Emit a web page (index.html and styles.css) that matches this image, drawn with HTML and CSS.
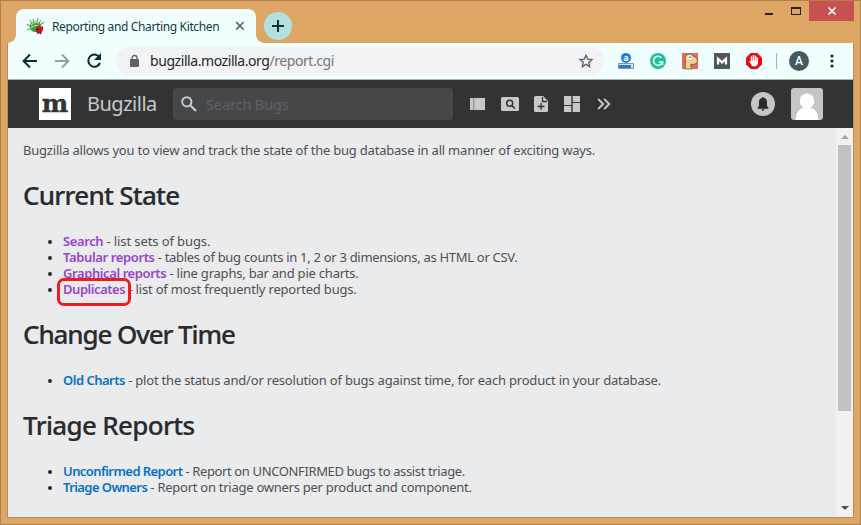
FILE: index.html
```html
<!DOCTYPE html>
<html lang="en">
<head>
<meta charset="utf-8">
<title>Reporting and Charting Kitchen</title>
<link rel="stylesheet" href="styles.css">
</head>
<body>
<div class="window">
  <header class="titlebar">
    <div class="tab">
      <svg class="favicon" width="18" height="18" viewBox="0 0 18 18"><g stroke="#4fae50" stroke-width="1.1" fill="none"><path d="M5 7 3 3M7 6 6 2M10 5 11 1M12 6 14 3M13 8 17 5M3 9 0 7M3 12 0 13"/></g><ellipse cx="8.500" cy="9.800" rx="5.800" ry="5.300" fill="#3f9a46"/><path d="M4 8q4-4 8-2M4 11q4-4 8-2" stroke="#a5d993" stroke-width="1.200" fill="none"/><path d="m9 11 3-3 2 2 2-1v4l-2 3-4 1-1-3z" fill="#d51218"/><path d="m9 12 2 1M13 15l1 2" stroke="#421814" stroke-width="1.500"/></svg>
      <span class="tab-title">Reporting and Charting Kitchen</span>
      <svg class="tab-close" width="10" height="10" viewBox="0 0 10 10"><path d="m1.200 1.200 7.400 7.400m0-7.400L1.200 8.600" stroke="#53706f" stroke-width="1.700"/></svg>
    </div>
    <div class="new-tab"><svg width="12" height="12" viewBox="0 0 12 12"><path d="M6 0v12M0 6h12" stroke="#0b3336" stroke-width="2"/></svg></div>
    <div class="controls">
      <i class="minimize"></i><i class="maximize"></i>
      <div class="close"><svg width="8" height="8" viewBox="0 0 8 8"><path d="m.5.5 7 7m0-7-7 7" stroke="#fff" stroke-width="1.700"/></svg></div>
    </div>
  </header>
  <main class="frame">
    <nav class="toolbar">
      <svg class="back" width="16" height="16" viewBox="0 0 16 16"><path d="M15 8H2M8 1.500 1.600 8 8 14.500" fill="none" stroke="#0a2c30" stroke-width="2"/></svg>
      <svg class="forward" width="16" height="16" viewBox="0 0 16 16"><path d="M1 8h13M8 1.500 14.400 8 8 14.500" fill="none" stroke="#8da2a4" stroke-width="2"/></svg>
      <svg class="reload" width="16" height="16" viewBox="0 0 16 16"><path d="M13.400 4.200A6.100 6.100 0 1 0 14 10" fill="none" stroke="#0a2c30" stroke-width="2"/><path d="M15 0v7H8z" fill="#0a2c30"/></svg>
      <div class="address">
        <svg class="lock" width="9" height="12" viewBox="0 0 9 12"><rect y="4" width="9" height="8" rx="1" fill="#5f6368"/><path d="M2 5V3a2.500 2.500 0 0 1 5 0v2" fill="none" stroke="#5f6368" stroke-width="1.300"/></svg>
        <span class="url">bugzilla.mozilla.org<span class="path">/report.cgi</span></span>
        <svg class="star" width="14" height="14" viewBox="0 0 14 14"><path d="m7 1.300 1.700 3.800 4.200.4-3.100 2.800.9 4.200L7 10.300l-3.700 2.200.9-4.200-3.100-2.800 4.200-.4z" fill="none" stroke="#5f6368" stroke-width="1.400"/></svg>
      </div>
      <div class="extensions">
        <svg width="16" height="16" viewBox="0 0 16 16"><circle cx="8" cy="4.900" r="5" fill="#1a7ee6"/><text x="8" y="7.600" text-anchor="middle" class="ext-a">a</text><path d="M.5 10.500h15v5H.5z" fill="#dfe5e8" stroke="#8a949c"/><path d="M1 12h12v3H1z" fill="#2878dc"/></svg>
        <svg width="16" height="16" viewBox="0 0 16 16"><circle cx="8" cy="8" r="8" fill="#15c39a"/><path d="M11.400 4.800A4.500 4.500 0 1 0 12.400 9H8.800m3.700-.1v3" fill="none" stroke="#fff" stroke-width="1.600"/></svg>
        <svg width="16" height="16" viewBox="0 0 16 16"><path d="M0 0h16v16H0z" fill="#e66a60"/><path d="M3 16 3.500 8Q2 3 5.500 1.500T11 3q4 1 4.500 4T13 11q-3 1-4 0-1 2 1 5z" fill="#f4cf91" stroke="#5e4632" stroke-width=".7"/><circle cx="7.500" cy="4.300" r="2.200" fill="#fff"/><circle cx="8" cy="4.300" r=".8" fill="#222"/></svg>
        <svg width="16" height="16" viewBox="0 0 16 16"><path d="M0 0h16v16H0z" fill="#50575c"/><path d="M4 11.500V5.800l4 3.600 4-3.600v5.700" fill="none" stroke="#fff" stroke-width="2.200"/></svg>
        <svg width="16" height="16" viewBox="0 0 16 16"><path d="M4.700 0h6.600L16 4.700v6.600L11.300 16H4.700L0 11.300V4.700z" fill="#e40d0d"/><path d="M5.500 9V4M7.500 8V2.800M9.500 8V3.200M11.300 9V5" stroke="#fff" stroke-width="1.500" stroke-linecap="round"/><path d="M4.800 7.500H12v2.300q-.3 3.700-3.400 3.700T5 11L3 8.500q1-.8 1.800.3z" fill="#fff"/></svg>
      </div>
      <i class="divider"></i>
      <div class="profile">A</div>
      <svg class="more" width="4" height="14" viewBox="0 0 4 14"><g fill="#0a2c30"><circle cx="2" cy="2" r="1.600"/><circle cx="2" cy="7" r="1.600"/><circle cx="2" cy="12" r="1.600"/></g></svg>
    </nav>
    <header class="site-header">
      <div class="logo">m</div>
      <div class="brand">Bugzilla</div>
      <div class="search">
        <svg width="16" height="16" viewBox="0 0 16 16"><circle cx="5.800" cy="5.800" r="4.600" fill="none" stroke="#c4c8cc" stroke-width="2"/><path d="m9 9 6 6" stroke="#c4c8cc" stroke-width="2.200"/></svg>
        <span>Search Bugs</span>
      </div>
      <div class="tools">
        <svg width="15" height="12" viewBox="0 0 15 12"><path d="M0 0h15v12H0z" fill="#c7c9cb"/><path d="M3.800 0v12" stroke="#6d7073" stroke-width=".8"/></svg>
        <svg width="18" height="14" viewBox="0 0 18 14"><rect width="18" height="14" rx="1.500" fill="#c7c9cb"/><circle cx="8.700" cy="6.300" r="3" fill="none" stroke="#323335" stroke-width="1.500"/><path d="m10.800 8.500 3 3" stroke="#323335" stroke-width="1.600"/></svg>
        <svg width="14" height="16" viewBox="0 0 14 16"><path d="M1.500 0H9l5 5v9.500q0 1.500-1.500 1.500h-11Q0 16 0 14.500v-13Q0 0 1.500 0z" fill="#c7c9cb"/><path d="M8.500 1v4.500h4.500M7 7v7M3.500 10.500h7" fill="none" stroke="#323335" stroke-width="1.300"/></svg>
        <svg width="16" height="16" viewBox="0 0 16 16"><path d="M0 0h7.300v9H0zM0 10h7.300v6H0zM8.700 0H16v6H8.700zM8.700 7H16v9H8.700z" fill="#c7c9cb"/></svg>
        <svg class="chevrons" width="14" height="12" viewBox="0 0 14 12"><path d="m1.200 1 5 5-5 5m6-10 5 5-5 5" fill="none" stroke="#c7c9cb" stroke-width="1.900"/></svg>
      </div>
      <div class="bell"><svg width="12" height="14" viewBox="0 0 12 14"><path d="M5 1q0-1 1-1t1 1q3 .7 3 4v4l1.500 2v.8H.5V11L2 9V5q0-3.300 3-4zM4.500 12.300h3q-.3 1.500-1.500 1.500t-1.500-1.500z" fill="#29292b"/></svg></div>
      <svg class="avatar" width="32" height="32" viewBox="0 0 32 32"><rect width="32" height="32" rx="3" fill="#c5c5c5"/><ellipse cx="16" cy="13" rx="7.300" ry="7.500" fill="#fff"/><path d="M4.500 32Q5 23 11 20h10q6 3 6.500 12z" fill="#fff"/></svg>
    </header>
    <div class="viewport">
      <article class="page">
        <p class="intro">Bugzilla allows you to view and track the state of the bug database in all manner of exciting ways.</p>
        <h2 class="h-state">Current State</h2>
        <ul class="visited">
          <li><a class="l-search">Search</a><span class="d-search"> - list sets of bugs.</span></li>
          <li><a class="l-tabular">Tabular reports</a><span class="d-tabular"> - tables of bug counts in 1, 2 or 3 dimensions, as HTML or CSV.</span></li>
          <li><a class="l-graph">Graphical reports</a><span class="d-graph"> - line graphs, bar and pie charts.</span></li>
          <li class="marked"><a class="l-dup">Duplicates</a><span class="d-dup"> - list of most frequently reported bugs.</span></li>
        </ul>
        <h2 class="h-change">Change Over Time</h2>
        <ul>
          <li><a class="l-old">Old Charts</a><span class="d-old"> - plot the status and/or resolution of bugs against time, for each product in your database.</span></li>
        </ul>
        <h2 class="h-triage">Triage Reports</h2>
        <ul>
          <li><a class="l-unconf">Unconfirmed Report</a><span class="d-unconf"> - Report on UNCONFIRMED bugs to assist triage.</span></li>
          <li><a class="l-owners">Triage Owners</a><span class="d-owners"> - Report on triage owners per product and component.</span></li>
        </ul>
      </article>
      <aside class="scrollbar"><i class="up"></i><i class="thumb"></i><i class="down"></i></aside>
    </div>
  </main>
</div>
</body>
</html>
```
FILE: styles.css
```css
*, *::before, *::after { box-sizing: border-box; }
body { margin: 0; overflow: hidden; font-family: "Noto Sans", sans-serif; }
svg { display: block; flex: none; overflow: visible; }
i { display: block; flex: none; }

.window { width: 861px; height: 525px; padding: 0 6px 6px; background: #dea665; border: 1px solid #ae804c; display: flex; flex-direction: column; }
.titlebar { height: 42px; flex: none; display: flex; align-items: flex-start; padding-left: 9px; }
.tab { position: relative; margin-top: 8px; width: 240px; height: 34px; border-radius: 8px 8px 0 0; background: #f0fffe; display: flex; align-items: center; padding-left: 11px; }
.tab::before, .tab::after { content: ""; position: absolute; bottom: 0; width: 8px; height: 8px; }
.tab::before { left: -8px; background: radial-gradient(circle at 0 0, transparent 7.5px, #f0fffe 8px); }
.tab::after { right: -8px; background: radial-gradient(circle at 100% 0, transparent 7.5px, #f0fffe 8px); }
.tab-title { margin-left: 7px; width: 170px; font-size: 12px; letter-spacing: -.36px; color: #163b3e; white-space: nowrap; }
.tab-close { margin-left: 13px; }
.new-tab { margin: 11px 0 0 8px; width: 28px; height: 28px; border-radius: 50%; background: #b1e1df; display: grid; place-items: center; }
.controls { margin-left: auto; display: flex; }
.minimize { width: 8px; height: 2px; background: #222; margin: 12px 18px 0 0; }
.maximize { width: 10px; height: 8px; border: 1px solid #222; border-top-width: 2px; margin: 6px 8px 0 0; }
.close { width: 45px; height: 20px; background: #c75050; display: grid; place-items: center; }

.frame { flex: 1; min-height: 0; border: 1px solid #bc8d58; border-top: 0; display: flex; flex-direction: column; background: #eaebed; }
.toolbar { height: 37px; flex: none; background: #f0fffe; border-bottom: 1px solid #a5b2b2; display: flex; align-items: center; padding-left: 14px; }
.forward, .reload { margin-left: 16px; }
.address { width: 488px; height: 28px; margin-left: 14px; border-radius: 14px; background: #f1f3f4; display: flex; align-items: center; padding: 0 11px 0 14px; }
.url { margin-left: 11px; font-size: 14px; color: #24282b; white-space: nowrap; letter-spacing: -.43px; line-height: 26px; }
.path { color: #72777b; }
.star { margin-left: auto; }
.extensions { display: flex; gap: 16px; margin-left: 14px; }
.ext-a { font: bold 9px "Noto Sans", sans-serif; fill: #fff; }
.divider { width: 1px; height: 16px; background: #91b6be; margin-left: 14px; }
.profile { width: 20px; height: 20px; border-radius: 50%; background: #435961; margin-left: 12px; color: #fff; font: 500 12px/20px Roboto, sans-serif; text-align: center; }
.more { margin-left: 21px; }

.site-header { height: 48px; flex: none; background: #323335; display: flex; align-items: center; padding: 0 30px 0 31px; }
.logo { width: 32px; height: 32px; background: #fff; color: #323335; font: bold 25px/32px "DejaVu Serif", serif; display: flex; justify-content: center; -webkit-text-stroke: .4px #323335; }
.brand { margin-left: 16px; width: 70px; font-size: 20px; line-height: 30px; color: #c7c9cb; letter-spacing: -.5px; white-space: nowrap; }
.search { margin-left: 16px; width: 280px; height: 32px; border-radius: 4px; background: #464749; display: flex; align-items: center; padding-left: 8px; color: #5e6063; font-size: 15px; white-space: nowrap; }
.search span { margin-left: 9px; letter-spacing: -.4px; }
.tools { margin-left: 17px; display: flex; align-items: center; gap: 16px; }
.tools svg:nth-child(2), .tools svg:nth-child(3) { margin-left: -.5px; }
.chevrons { margin-left: 1px; }
.bell { margin-left: auto; width: 24px; height: 24px; border-radius: 50%; background: #c5c5c5; display: grid; place-items: center; }
.avatar { margin-left: 16px; }

.viewport { flex: 1; min-height: 0; display: flex; }
.page { flex: 1; padding: 14px 15px 0; font-size: 13px; line-height: 16px; color: #4f5052; white-space: nowrap; }
.page p { margin: 0; }
.page h2 { margin: 21px 0 22px; font-size: 26px; line-height: 32px; font-weight: 500; color: #292a2c; -webkit-text-stroke: .2px #292a2c; }
.page ul { margin: 0; padding-left: 40px; }
.page li { height: 16px; position: relative; list-style: none; }
.page li::before { content: ""; position: absolute; left: -15px; top: 7px; width: 4px; height: 4px; border-radius: 50%; background: #292a2c; }
.page a { color: #0670c8; font-weight: 600; }
.page .visited a { color: #9646ca; }
.page span { white-space: pre; }
.marked::after { content: ""; position: absolute; left: -6px; top: -3px; width: 74px; height: 28px; border: 3px solid #ed1c24; border-radius: 7px; }

/* Per-line tracking */
.intro { letter-spacing: -.21px; }
.h-state { letter-spacing: -.75px; }
.h-change { letter-spacing: -1.12px; }
.h-triage { letter-spacing: -.67px; }
.l-search { letter-spacing: -.4px; }
.d-search { letter-spacing: -.1px; }
.l-tabular { letter-spacing: -.37px; }
.d-tabular { letter-spacing: -.3px; }
.l-graph { letter-spacing: -.41px; }
.d-graph { letter-spacing: -.22px; }
.l-dup { letter-spacing: -.45px; }
.d-dup { letter-spacing: -.19px; }
.l-old { letter-spacing: -.5px; }
.d-old { letter-spacing: -.2px; }
.l-unconf { letter-spacing: -.57px; }
.d-unconf { letter-spacing: -.37px; }
.l-owners { letter-spacing: -.58px; }
.d-owners { letter-spacing: -.26px; }

.scrollbar { width: 17px; background: #f1f1f0; display: flex; flex-direction: column; align-items: center; }
.up { margin: 7px 0; border: 4px solid transparent; border-top: 0; border-bottom-color: #a3a3a3; }
.thumb { width: 13px; height: 266px; margin-top: -1px; background: #c1c1c1; }
.down { margin: auto 0 7px; border: 4px solid transparent; border-bottom: 0; border-top-color: #505050; }
```
